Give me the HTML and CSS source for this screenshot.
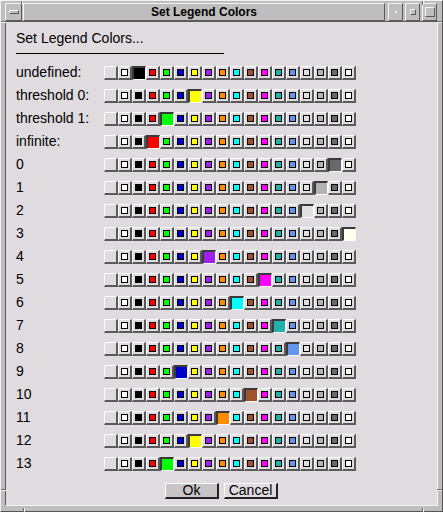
FILE: index.html
```html
<!DOCTYPE html>
<html>
<head>
<meta charset="utf-8">
<link rel="stylesheet" href="styles.css">
</head>
<body>
<div class="frame">
  <span class="tick tv" style="left:20px;top:0"></span>
  <span class="tick tv" style="left:421px;top:0"></span>
  <span class="tick tv tvb" style="left:22px"></span>
  <span class="tick tv tvb" style="left:421px"></span>
  <span class="tick th" style="left:0;top:20px"></span>
  <span class="tick th" style="right:0;top:20px"></span>
  <span class="tick th" style="left:0;top:488px"></span>
  <span class="tick th" style="right:0;top:488px"></span>
  <div class="titlebar">
    <div class="tb-btn tb-menu"><span class="menu-bar"></span></div>
    <div class="tb-title">Set Legend Colors</div>
    <div class="tb-btn tb-min"><span class="dot"></span></div>
    <div class="tb-btn tb-max"><span class="sq-small"></span></div>
    <div class="tb-btn tb-full"><span class="sq-big"></span></div>
  </div>
  <div class="content">
    <div class="heading">Set Legend Colors...</div>
    <div class="rule"></div>
    <div class="rows">
      <div class="row"><span class="lbl">undefined:</span><div class="strip"><span class="b"></span><span class="b"><span class="s c1"></span></span><span class="b on c2"></span><span class="b"><span class="s c3"></span></span><span class="b"><span class="s c4"></span></span><span class="b"><span class="s c5"></span></span><span class="b"><span class="s c6"></span></span><span class="b"><span class="s c7"></span></span><span class="b"><span class="s c8"></span></span><span class="b"><span class="s c9"></span></span><span class="b"><span class="s c10"></span></span><span class="b"><span class="s c11"></span></span><span class="b"><span class="s c12"></span></span><span class="b"><span class="s c13"></span></span><span class="b"><span class="s c14"></span></span><span class="b"><span class="s c15"></span></span><span class="b"><span class="s c16"></span></span><span class="b"><span class="s c17"></span></span></div></div>
      <div class="row"><span class="lbl">threshold 0:</span><div class="strip"><span class="b"></span><span class="b"><span class="s c1"></span></span><span class="b"><span class="s c2"></span></span><span class="b"><span class="s c3"></span></span><span class="b"><span class="s c4"></span></span><span class="b"><span class="s c5"></span></span><span class="b on c6"></span><span class="b"><span class="s c7"></span></span><span class="b"><span class="s c8"></span></span><span class="b"><span class="s c9"></span></span><span class="b"><span class="s c10"></span></span><span class="b"><span class="s c11"></span></span><span class="b"><span class="s c12"></span></span><span class="b"><span class="s c13"></span></span><span class="b"><span class="s c14"></span></span><span class="b"><span class="s c15"></span></span><span class="b"><span class="s c16"></span></span><span class="b"><span class="s c17"></span></span></div></div>
      <div class="row"><span class="lbl">threshold 1:</span><div class="strip"><span class="b"></span><span class="b"><span class="s c1"></span></span><span class="b"><span class="s c2"></span></span><span class="b"><span class="s c3"></span></span><span class="b on c4"></span><span class="b"><span class="s c5"></span></span><span class="b"><span class="s c6"></span></span><span class="b"><span class="s c7"></span></span><span class="b"><span class="s c8"></span></span><span class="b"><span class="s c9"></span></span><span class="b"><span class="s c10"></span></span><span class="b"><span class="s c11"></span></span><span class="b"><span class="s c12"></span></span><span class="b"><span class="s c13"></span></span><span class="b"><span class="s c14"></span></span><span class="b"><span class="s c15"></span></span><span class="b"><span class="s c16"></span></span><span class="b"><span class="s c17"></span></span></div></div>
      <div class="row"><span class="lbl">infinite:</span><div class="strip"><span class="b"></span><span class="b"><span class="s c1"></span></span><span class="b"><span class="s c2"></span></span><span class="b on c3"></span><span class="b"><span class="s c4"></span></span><span class="b"><span class="s c5"></span></span><span class="b"><span class="s c6"></span></span><span class="b"><span class="s c7"></span></span><span class="b"><span class="s c8"></span></span><span class="b"><span class="s c9"></span></span><span class="b"><span class="s c10"></span></span><span class="b"><span class="s c11"></span></span><span class="b"><span class="s c12"></span></span><span class="b"><span class="s c13"></span></span><span class="b"><span class="s c14"></span></span><span class="b"><span class="s c15"></span></span><span class="b"><span class="s c16"></span></span><span class="b"><span class="s c17"></span></span></div></div>
      <div class="row"><span class="lbl">0</span><div class="strip"><span class="b"></span><span class="b"><span class="s c1"></span></span><span class="b"><span class="s c2"></span></span><span class="b"><span class="s c3"></span></span><span class="b"><span class="s c4"></span></span><span class="b"><span class="s c5"></span></span><span class="b"><span class="s c6"></span></span><span class="b"><span class="s c7"></span></span><span class="b"><span class="s c8"></span></span><span class="b"><span class="s c9"></span></span><span class="b"><span class="s c10"></span></span><span class="b"><span class="s c11"></span></span><span class="b"><span class="s c12"></span></span><span class="b"><span class="s c13"></span></span><span class="b"><span class="s c14"></span></span><span class="b"><span class="s c15"></span></span><span class="b on c16"></span><span class="b"><span class="s c17"></span></span></div></div>
      <div class="row"><span class="lbl">1</span><div class="strip"><span class="b"></span><span class="b"><span class="s c1"></span></span><span class="b"><span class="s c2"></span></span><span class="b"><span class="s c3"></span></span><span class="b"><span class="s c4"></span></span><span class="b"><span class="s c5"></span></span><span class="b"><span class="s c6"></span></span><span class="b"><span class="s c7"></span></span><span class="b"><span class="s c8"></span></span><span class="b"><span class="s c9"></span></span><span class="b"><span class="s c10"></span></span><span class="b"><span class="s c11"></span></span><span class="b"><span class="s c12"></span></span><span class="b"><span class="s c13"></span></span><span class="b"><span class="s c14"></span></span><span class="b on c15"></span><span class="b"><span class="s c16"></span></span><span class="b"><span class="s c17"></span></span></div></div>
      <div class="row"><span class="lbl">2</span><div class="strip"><span class="b"></span><span class="b"><span class="s c1"></span></span><span class="b"><span class="s c2"></span></span><span class="b"><span class="s c3"></span></span><span class="b"><span class="s c4"></span></span><span class="b"><span class="s c5"></span></span><span class="b"><span class="s c6"></span></span><span class="b"><span class="s c7"></span></span><span class="b"><span class="s c8"></span></span><span class="b"><span class="s c9"></span></span><span class="b"><span class="s c10"></span></span><span class="b"><span class="s c11"></span></span><span class="b"><span class="s c12"></span></span><span class="b"><span class="s c13"></span></span><span class="b on c14"></span><span class="b"><span class="s c15"></span></span><span class="b"><span class="s c16"></span></span><span class="b"><span class="s c17"></span></span></div></div>
      <div class="row"><span class="lbl">3</span><div class="strip"><span class="b"></span><span class="b"><span class="s c1"></span></span><span class="b"><span class="s c2"></span></span><span class="b"><span class="s c3"></span></span><span class="b"><span class="s c4"></span></span><span class="b"><span class="s c5"></span></span><span class="b"><span class="s c6"></span></span><span class="b"><span class="s c7"></span></span><span class="b"><span class="s c8"></span></span><span class="b"><span class="s c9"></span></span><span class="b"><span class="s c10"></span></span><span class="b"><span class="s c11"></span></span><span class="b"><span class="s c12"></span></span><span class="b"><span class="s c13"></span></span><span class="b"><span class="s c14"></span></span><span class="b"><span class="s c15"></span></span><span class="b"><span class="s c16"></span></span><span class="b on c17"></span></div></div>
      <div class="row"><span class="lbl">4</span><div class="strip"><span class="b"></span><span class="b"><span class="s c1"></span></span><span class="b"><span class="s c2"></span></span><span class="b"><span class="s c3"></span></span><span class="b"><span class="s c4"></span></span><span class="b"><span class="s c5"></span></span><span class="b"><span class="s c6"></span></span><span class="b on c7"></span><span class="b"><span class="s c8"></span></span><span class="b"><span class="s c9"></span></span><span class="b"><span class="s c10"></span></span><span class="b"><span class="s c11"></span></span><span class="b"><span class="s c12"></span></span><span class="b"><span class="s c13"></span></span><span class="b"><span class="s c14"></span></span><span class="b"><span class="s c15"></span></span><span class="b"><span class="s c16"></span></span><span class="b"><span class="s c17"></span></span></div></div>
      <div class="row"><span class="lbl">5</span><div class="strip"><span class="b"></span><span class="b"><span class="s c1"></span></span><span class="b"><span class="s c2"></span></span><span class="b"><span class="s c3"></span></span><span class="b"><span class="s c4"></span></span><span class="b"><span class="s c5"></span></span><span class="b"><span class="s c6"></span></span><span class="b"><span class="s c7"></span></span><span class="b"><span class="s c8"></span></span><span class="b"><span class="s c9"></span></span><span class="b"><span class="s c10"></span></span><span class="b on c11"></span><span class="b"><span class="s c12"></span></span><span class="b"><span class="s c13"></span></span><span class="b"><span class="s c14"></span></span><span class="b"><span class="s c15"></span></span><span class="b"><span class="s c16"></span></span><span class="b"><span class="s c17"></span></span></div></div>
      <div class="row"><span class="lbl">6</span><div class="strip"><span class="b"></span><span class="b"><span class="s c1"></span></span><span class="b"><span class="s c2"></span></span><span class="b"><span class="s c3"></span></span><span class="b"><span class="s c4"></span></span><span class="b"><span class="s c5"></span></span><span class="b"><span class="s c6"></span></span><span class="b"><span class="s c7"></span></span><span class="b"><span class="s c8"></span></span><span class="b on c9"></span><span class="b"><span class="s c10"></span></span><span class="b"><span class="s c11"></span></span><span class="b"><span class="s c12"></span></span><span class="b"><span class="s c13"></span></span><span class="b"><span class="s c14"></span></span><span class="b"><span class="s c15"></span></span><span class="b"><span class="s c16"></span></span><span class="b"><span class="s c17"></span></span></div></div>
      <div class="row"><span class="lbl">7</span><div class="strip"><span class="b"></span><span class="b"><span class="s c1"></span></span><span class="b"><span class="s c2"></span></span><span class="b"><span class="s c3"></span></span><span class="b"><span class="s c4"></span></span><span class="b"><span class="s c5"></span></span><span class="b"><span class="s c6"></span></span><span class="b"><span class="s c7"></span></span><span class="b"><span class="s c8"></span></span><span class="b"><span class="s c9"></span></span><span class="b"><span class="s c10"></span></span><span class="b"><span class="s c11"></span></span><span class="b on c12"></span><span class="b"><span class="s c13"></span></span><span class="b"><span class="s c14"></span></span><span class="b"><span class="s c15"></span></span><span class="b"><span class="s c16"></span></span><span class="b"><span class="s c17"></span></span></div></div>
      <div class="row"><span class="lbl">8</span><div class="strip"><span class="b"></span><span class="b"><span class="s c1"></span></span><span class="b"><span class="s c2"></span></span><span class="b"><span class="s c3"></span></span><span class="b"><span class="s c4"></span></span><span class="b"><span class="s c5"></span></span><span class="b"><span class="s c6"></span></span><span class="b"><span class="s c7"></span></span><span class="b"><span class="s c8"></span></span><span class="b"><span class="s c9"></span></span><span class="b"><span class="s c10"></span></span><span class="b"><span class="s c11"></span></span><span class="b"><span class="s c12"></span></span><span class="b on c13"></span><span class="b"><span class="s c14"></span></span><span class="b"><span class="s c15"></span></span><span class="b"><span class="s c16"></span></span><span class="b"><span class="s c17"></span></span></div></div>
      <div class="row"><span class="lbl">9</span><div class="strip"><span class="b"></span><span class="b"><span class="s c1"></span></span><span class="b"><span class="s c2"></span></span><span class="b"><span class="s c3"></span></span><span class="b"><span class="s c4"></span></span><span class="b on c5"></span><span class="b"><span class="s c6"></span></span><span class="b"><span class="s c7"></span></span><span class="b"><span class="s c8"></span></span><span class="b"><span class="s c9"></span></span><span class="b"><span class="s c10"></span></span><span class="b"><span class="s c11"></span></span><span class="b"><span class="s c12"></span></span><span class="b"><span class="s c13"></span></span><span class="b"><span class="s c14"></span></span><span class="b"><span class="s c15"></span></span><span class="b"><span class="s c16"></span></span><span class="b"><span class="s c17"></span></span></div></div>
      <div class="row"><span class="lbl">10</span><div class="strip"><span class="b"></span><span class="b"><span class="s c1"></span></span><span class="b"><span class="s c2"></span></span><span class="b"><span class="s c3"></span></span><span class="b"><span class="s c4"></span></span><span class="b"><span class="s c5"></span></span><span class="b"><span class="s c6"></span></span><span class="b"><span class="s c7"></span></span><span class="b"><span class="s c8"></span></span><span class="b"><span class="s c9"></span></span><span class="b on c10"></span><span class="b"><span class="s c11"></span></span><span class="b"><span class="s c12"></span></span><span class="b"><span class="s c13"></span></span><span class="b"><span class="s c14"></span></span><span class="b"><span class="s c15"></span></span><span class="b"><span class="s c16"></span></span><span class="b"><span class="s c17"></span></span></div></div>
      <div class="row"><span class="lbl">11</span><div class="strip"><span class="b"></span><span class="b"><span class="s c1"></span></span><span class="b"><span class="s c2"></span></span><span class="b"><span class="s c3"></span></span><span class="b"><span class="s c4"></span></span><span class="b"><span class="s c5"></span></span><span class="b"><span class="s c6"></span></span><span class="b"><span class="s c7"></span></span><span class="b on c8"></span><span class="b"><span class="s c9"></span></span><span class="b"><span class="s c10"></span></span><span class="b"><span class="s c11"></span></span><span class="b"><span class="s c12"></span></span><span class="b"><span class="s c13"></span></span><span class="b"><span class="s c14"></span></span><span class="b"><span class="s c15"></span></span><span class="b"><span class="s c16"></span></span><span class="b"><span class="s c17"></span></span></div></div>
      <div class="row"><span class="lbl">12</span><div class="strip"><span class="b"></span><span class="b"><span class="s c1"></span></span><span class="b"><span class="s c2"></span></span><span class="b"><span class="s c3"></span></span><span class="b"><span class="s c4"></span></span><span class="b"><span class="s c5"></span></span><span class="b on c6"></span><span class="b"><span class="s c7"></span></span><span class="b"><span class="s c8"></span></span><span class="b"><span class="s c9"></span></span><span class="b"><span class="s c10"></span></span><span class="b"><span class="s c11"></span></span><span class="b"><span class="s c12"></span></span><span class="b"><span class="s c13"></span></span><span class="b"><span class="s c14"></span></span><span class="b"><span class="s c15"></span></span><span class="b"><span class="s c16"></span></span><span class="b"><span class="s c17"></span></span></div></div>
      <div class="row"><span class="lbl">13</span><div class="strip"><span class="b"></span><span class="b"><span class="s c1"></span></span><span class="b"><span class="s c2"></span></span><span class="b"><span class="s c3"></span></span><span class="b on c4"></span><span class="b"><span class="s c5"></span></span><span class="b"><span class="s c6"></span></span><span class="b"><span class="s c7"></span></span><span class="b"><span class="s c8"></span></span><span class="b"><span class="s c9"></span></span><span class="b"><span class="s c10"></span></span><span class="b"><span class="s c11"></span></span><span class="b"><span class="s c12"></span></span><span class="b"><span class="s c13"></span></span><span class="b"><span class="s c14"></span></span><span class="b"><span class="s c15"></span></span><span class="b"><span class="s c16"></span></span><span class="b"><span class="s c17"></span></span></div></div>
    </div>
    <div class="actions">
      <button class="btn btn-ok">Ok</button>
      <button class="btn">Cancel</button>
    </div>
  </div>
</div>
</body>
</html>
```

FILE: styles.css
```css
* { box-sizing: border-box; }
html, body { margin: 0; padding: 0; }
body {
  width: 443px;
  height: 512px;
  background: #bebebe;
  font-family: "Liberation Sans", Arial, sans-serif;
  color: #000;
}
.frame {
  position: relative;
  width: 443px;
  height: 512px;
  display: flex;
  flex-direction: column;
  background: #bebebe;
  border: 1px solid;
  border-color: #f2f2f2 #555 #555 #f2f2f2;
  padding: 2px 4px 5px 4px;
}
.tick { position: absolute; background: #6a6a6a; }
.tv { width: 1px; height: 4px; box-shadow: 1px 0 0 #f2f2f2; }
.tvb { top: 507px; height: 5px; }
.th { width: 5px; height: 1px; box-shadow: 0 1px 0 #f2f2f2; }

.titlebar {
  display: flex;
  height: 18px;
  gap: 1px;
}
.tb-btn {
  border: 1px solid;
  border-color: #f4f4f4 #5a5a5a #5a5a5a #f4f4f4;
  background: #bebebe;
  display: flex;
  align-items: center;
  justify-content: center;
  flex: none;
}
.tb-menu { width: 17px; }
.menu-bar {
  width: 10px;
  height: 4px;
  border: 1px solid;
  border-color: #f4f4f4 #5a5a5a #5a5a5a #f4f4f4;
}
.tb-title {
  flex: 1;
  border: 1px solid;
  border-color: #f4f4f4 #5a5a5a #5a5a5a #f4f4f4;
  background: #bebebe;
  text-align: center;
  font-weight: bold;
  font-size: 12px;
  line-height: 16px;
  margin-right: 1px;
}
.tb-min, .tb-max, .tb-full { width: 15px; margin-left: 1px; }
.tb-full { margin-right: 1px; }
.dot { width: 2px; height: 2px; background: #f0f0f0; }
.sq-small {
  width: 6px;
  height: 6px;
  border: 1px solid;
  border-color: #f4f4f4 #5a5a5a #5a5a5a #f4f4f4;
}
.sq-big {
  width: 10px;
  height: 10px;
  border: 1px solid;
  border-color: #f4f4f4 #5a5a5a #5a5a5a #f4f4f4;
}

.content {
  flex: 1;
  background: #dfdbdf;
  border: 1px solid;
  border-color: #5a5a5a #f4f4f4 #f4f4f4 #5a5a5a;
  padding: 8px 0 0 10px;
  display: flex;
  flex-direction: column;
}
.heading {
  font-size: 14px;
  line-height: 16px;
}
.rule {
  width: 208px;
  height: 1px;
  background: #000;
  margin-top: 7px;
}
.rows {
  margin-top: 12px;
  display: flex;
  flex-direction: column;
  gap: 9px;
}
.row {
  display: flex;
  align-items: center;
  height: 14px;
}
.lbl {
  width: 88px;
  font-size: 14px;
  line-height: 14px;
  position: relative;
  top: -1px;
}
.strip { display: flex; }
.b {
  width: 14px;
  height: 14px;
  border-style: solid;
  border-width: 1px 2px 2px 1px;
  border-color: #fbfbfb #5a5a5a #5a5a5a #fbfbfb;
  background: #dfdbdf;
  padding: 1px;
}
.s {
  display: block;
  width: 7px;
  height: 7px;
  margin: 1px;
  border: 1px solid #000;
}
.b.on {
  border-width: 2px 1px 1px 2px;
  border-color: #3a3a3a #fbfbfb #fbfbfb #3a3a3a;
  padding: 0;
}
.c1 { background: #ffffff; }
.c2 { background: #000000; }
.c3 { background: #ff0000; }
.c4 { background: #00ff00; }
.c5 { background: #0000cd; }
.c6 { background: #ffff00; }
.c7 { background: #a020f0; }
.c8 { background: #ff8c00; }
.c9 { background: #00ffff; }
.c10 { background: #a0522d; }
.c11 { background: #ff00ff; }
.c12 { background: #20b2aa; }
.c13 { background: #6495ed; }
.c14 { background: #e0e0e0; }
.c15 { background: #b3b3b3; }
.c16 { background: #696969; }
.c17 { background: #fffff0; }

.actions {
  display: flex;
  justify-content: center;
  gap: 5px;
  margin-top: 12px;
  margin-left: -10px;
}
.btn {
  width: 54px;
  height: 16px;
  margin: 0;
  padding: 0;
  border-style: solid;
  border-width: 1px 2px 2px 1px;
  border-color: #fbfbfb #222 #222 #fbfbfb;
  background: #dfdbdf;
  font-family: "Liberation Sans", Arial, sans-serif;
  font-size: 14px;
  line-height: 13px;
  color: #000;
}
.btn-ok { background: #c6c6c6; }
```
